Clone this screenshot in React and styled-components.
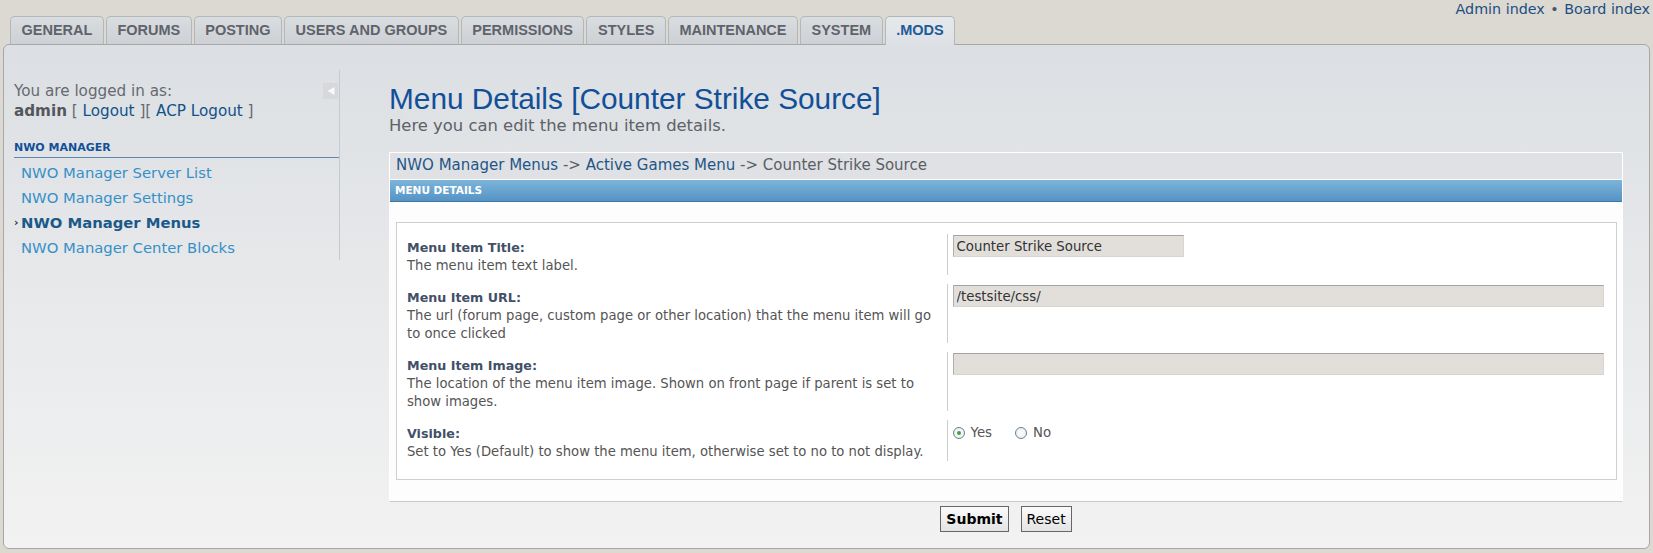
import React from 'react'
import styled, { createGlobalStyle } from 'styled-components'

const GlobalStyle = createGlobalStyle`
  html, body {
    margin: 0;
    padding: 0;
  }
  body {
    background: #dcd9d3;
    font-family: "DejaVu Sans", Verdana, sans-serif;
    font-size: 14.4px;
    color: #555;
  }
  * {
    box-sizing: border-box;
  }
`

const Page = styled.div`
  width: 1653px;
  height: 553px;
  display: flex;
  flex-direction: column;
  overflow: hidden;
`

const Header = styled.header`
  height: 44px;
  display: flex;
  justify-content: space-between;
  align-items: flex-end;
  padding: 0 3px 0 10px;
`

const TabBar = styled.nav`
  display: flex;
  align-items: flex-end;
  gap: 2px;
`

const Tab = styled.a`
  position: relative;
  z-index: ${(p) => (p.$active ? 2 : 1)};
  height: ${(p) => (p.$active ? '29px' : '28px')};
  margin-bottom: ${(p) => (p.$active ? '-1px' : '0')};
  padding: 0 10.5px;
  border: 1px solid #b3b6ba;
  border-bottom: none;
  border-radius: 5px 5px 0 0;
  background: ${(p) =>
    p.$active
      ? 'linear-gradient(to bottom, #e6e9ec, #dde0e4)'
      : 'linear-gradient(to bottom, #dadde0, #cdd0d4)'};
  color: ${(p) => (p.$active ? '#1d5c98' : '#5f636b')};
  font-family: "Liberation Sans", Arial, sans-serif;
  font-weight: bold;
  font-size: 14.5px;
  line-height: 27px;
  text-decoration: none;
  white-space: nowrap;
`

const TopLinks = styled.div`
  align-self: flex-start;
  font-size: 14.3px;
  line-height: 19px;
  color: #1d4e80;
  a {
    color: #1d4e80;
    text-decoration: none;
  }
  span {
    color: #4a5866;
    padding: 0 1px;
  }
`

const Panel = styled.main`
  flex: 1;
  margin: 0 3px 4px;
  border: 1px solid #a7a7a7;
  border-radius: 6px;
  background: linear-gradient(to bottom, #dcdfe3 0%, #e6e8ea 45%, #f2f2f2 100%);
  display: flex;
  align-items: flex-start;
`

const Sidebar = styled.aside`
  width: 336px;
  margin-top: 25px;
  padding-left: 10px;
  border-right: 1px solid #c6c9cd;
`

const Login = styled.div`
  display: flex;
  justify-content: space-between;
  align-items: flex-start;
  padding-top: 11px;
  font-size: 15.2px;
  line-height: 20px;
  color: #666a70;
  strong {
    color: #53575d;
  }
  a {
    color: #105289;
    text-decoration: none;
  }
`

const CollapseButton = styled.button`
  width: 15px;
  height: 16px;
  margin: 2px 1px 0 0;
  padding: 0;
  border: none;
  background: #d6d8db;
  display: flex;
  align-items: center;
  justify-content: center;
`

const MenuHeader = styled.div`
  margin-top: 19px;
  padding-bottom: 1px;
  border-bottom: 1px solid #5f87b1;
  font-size: 11px;
  font-weight: bold;
  line-height: 16px;
  color: #115098;
`

const MenuList = styled.ul`
  list-style: none;
  margin: 2px 0 0;
  padding: 0;
`

const MenuItem = styled.li`
  display: flex;
  font-size: 14.8px;
  line-height: 25px;
  color: ${(p) => (p.$active ? '#1b5a88' : '#3690c8')};
  font-weight: ${(p) => (p.$active ? 'bold' : 'normal')};
`

const Bullet = styled.span`
  width: 7px;
  font-size: 11px;
  font-weight: bold;
  color: #333;
`

const Content = styled.section`
  flex: 1;
  margin: 0 26px 0 49px;
  padding-top: 37px;
`

const Title = styled.h1`
  margin: 0;
  font-family: "Liberation Sans", Arial, sans-serif;
  font-weight: normal;
  font-size: 29.8px;
  line-height: 34px;
  color: #115098;
`

const Intro = styled.p`
  margin: 0;
  font-size: 16.4px;
  line-height: 20px;
  color: #5d6168;
`

const FormBox = styled.div`
  margin-top: 16px;
  border: 1px solid #fff;
  border-bottom-color: #c9c9c9;
  background: #fdfdfd;
`

const Crumbs = styled.div`
  margin-bottom: 1px;
  padding: 3px 6px 5px;
  background: #dfe1e4;
  line-height: 18px;
  font-size: 15px;
  color: #5a5e64;
  a {
    color: #1f5688;
    text-decoration: none;
  }
`

const BlueBar = styled.h2`
  margin: 0;
  height: 22px;
  padding-left: 5px;
  border-bottom: 1px solid #3e76a5;
  background: linear-gradient(to bottom, #7bb4da, #5694c5);
  color: #fff;
  font-size: 10.5px;
  font-weight: bold;
  line-height: 21px;
  text-transform: uppercase;
`

const FormInner = styled.div`
  padding: 20px 5px 21px 6px;
`

const Fieldset = styled.fieldset`
  margin: 0;
  padding: 11px 10px 9px;
  border: 1px solid #cfcfcf;
  background: #fff;
`

const Row = styled.dl`
  display: flex;
  margin: 0 0 9px;
`

const Term = styled.dt`
  width: 45%;
  flex-shrink: 0;
  padding-top: 5px;
  font-size: 13.2px;
  line-height: 18px;
  label {
    display: block;
    font-size: 12.7px;
    font-weight: bold;
    color: #425067;
  }
  span {
    display: block;
    color: #555;
  }
`

const Def = styled.dd`
  flex: 1;
  margin: 0;
  padding: 1px 2px 0 5px;
  border-left: 1px solid #cdcdcd;
`

const TextInput = styled.input`
  display: block;
  width: ${(p) => p.$width || '100%'};
  height: 22px;
  padding: 0 3px;
  border: 1px solid;
  border-color: #a3a3a3 #d8d5d0 #d8d5d0 #b0b0b0;
  background: #e2dfdb;
  font-family: "DejaVu Sans", Verdana, sans-serif;
  font-size: 13.3px;
  color: #333;
`

const RadioGroup = styled.div`
  display: flex;
  margin-top: 3px;
  line-height: 18px;
  font-size: 13.3px;
  color: #555;
`

const RadioLabel = styled.label`
  display: inline-flex;
  align-items: center;
  gap: 6px;
  margin-right: 23px;
`

const RadioDot = styled.span`
  width: 12px;
  height: 12px;
  border-radius: 50%;
  border: 1px solid #6f7f90;
  background: radial-gradient(circle, #fff 0%, #e6e9ec 100%);
  display: flex;
  align-items: center;
  justify-content: center;
  &::after {
    content: '';
    width: 4px;
    height: 4px;
    border-radius: 50%;
    background: ${(p) => (p.$checked ? '#3ea33e' : 'transparent')};
  }
`

const Buttons = styled.div`
  display: flex;
  justify-content: center;
  gap: 12px;
  margin-top: 4px;
`

const Button = styled.button`
  padding: 3px 5px;
  border: 1px solid #666;
  background: linear-gradient(to bottom, #fbfbfb, #e3e3e3);
  font-family: "DejaVu Sans", Verdana, sans-serif;
  font-size: 14px;
  font-weight: ${(p) => (p.$primary ? 'bold' : 'normal')};
  line-height: 18px;
  color: #000;
`

const tabs = [
  'General',
  'Forums',
  'Posting',
  'Users and groups',
  'Permissions',
  'Styles',
  'Maintenance',
  'System',
  '.Mods',
]

const menu = [
  'NWO Manager Server List',
  'NWO Manager Settings',
  'NWO Manager Menus',
  'NWO Manager Center Blocks',
]

const fields = [
  {
    label: 'Menu Item Title:',
    desc: 'The menu item text label.',
    value: 'Counter Strike Source',
    width: '231px',
  },
  {
    label: 'Menu Item URL:',
    desc: 'The url (forum page, custom page or other location) that the menu item will go to once clicked',
    value: '/testsite/css/',
  },
  {
    label: 'Menu Item Image:',
    desc: 'The location of the menu item image. Shown on front page if parent is set to show images.',
    value: '',
  },
]

export default function App() {
  return (
    <Page>
      <GlobalStyle />
      <Header>
        <TabBar>
          {tabs.map((t) => (
            <Tab key={t} $active={t === '.Mods'}>
              {t.toUpperCase()}
            </Tab>
          ))}
        </TabBar>
        <TopLinks>
          <a href="#">Admin index</a> <span>•</span> <a href="#">Board index</a>
        </TopLinks>
      </Header>

      <Panel>
        <Sidebar>
          <Login>
            <div>
              You are logged in as:
              <br />
              <strong>admin</strong> [ <a href="#">Logout</a> ][ <a href="#">ACP Logout</a> ]
            </div>
            <CollapseButton aria-label="collapse">
              <svg width="10" height="10" viewBox="0 0 10 10">
                <path d="M8.5 1 L1.5 5 L8.5 9 Z" fill="#f9f9f9" />
              </svg>
            </CollapseButton>
          </Login>
          <MenuHeader>NWO MANAGER</MenuHeader>
          <MenuList>
            {menu.map((m) => (
              <MenuItem key={m} $active={m === 'NWO Manager Menus'}>
                <Bullet>{m === 'NWO Manager Menus' ? '›' : ''}</Bullet>
                {m}
              </MenuItem>
            ))}
          </MenuList>
        </Sidebar>

        <Content>
          <Title>Menu Details [Counter Strike Source]</Title>
          <Intro>Here you can edit the menu item details.</Intro>

          <FormBox>
            <Crumbs>
              <a href="#">NWO Manager Menus</a> -&gt; <a href="#">Active Games Menu</a> -&gt; Counter Strike Source
            </Crumbs>
            <BlueBar>Menu Details</BlueBar>
            <FormInner>
              <Fieldset>
                {fields.map((f) => (
                  <Row key={f.label}>
                    <Term>
                      <label>{f.label}</label>
                      <span>{f.desc}</span>
                    </Term>
                    <Def>
                      <TextInput $width={f.width} defaultValue={f.value} />
                    </Def>
                  </Row>
                ))}
                <Row>
                  <Term>
                    <label>Visible:</label>
                    <span>Set to Yes (Default) to show the menu item, otherwise set to no to not display.</span>
                  </Term>
                  <Def>
                    <RadioGroup>
                      <RadioLabel>
                        <RadioDot $checked />
                        Yes
                      </RadioLabel>
                      <RadioLabel>
                        <RadioDot />
                        No
                      </RadioLabel>
                    </RadioGroup>
                  </Def>
                </Row>
              </Fieldset>
            </FormInner>
          </FormBox>

          <Buttons>
            <Button $primary>Submit</Button>
            <Button>Reset</Button>
          </Buttons>
        </Content>
      </Panel>
    </Page>
  )
}
